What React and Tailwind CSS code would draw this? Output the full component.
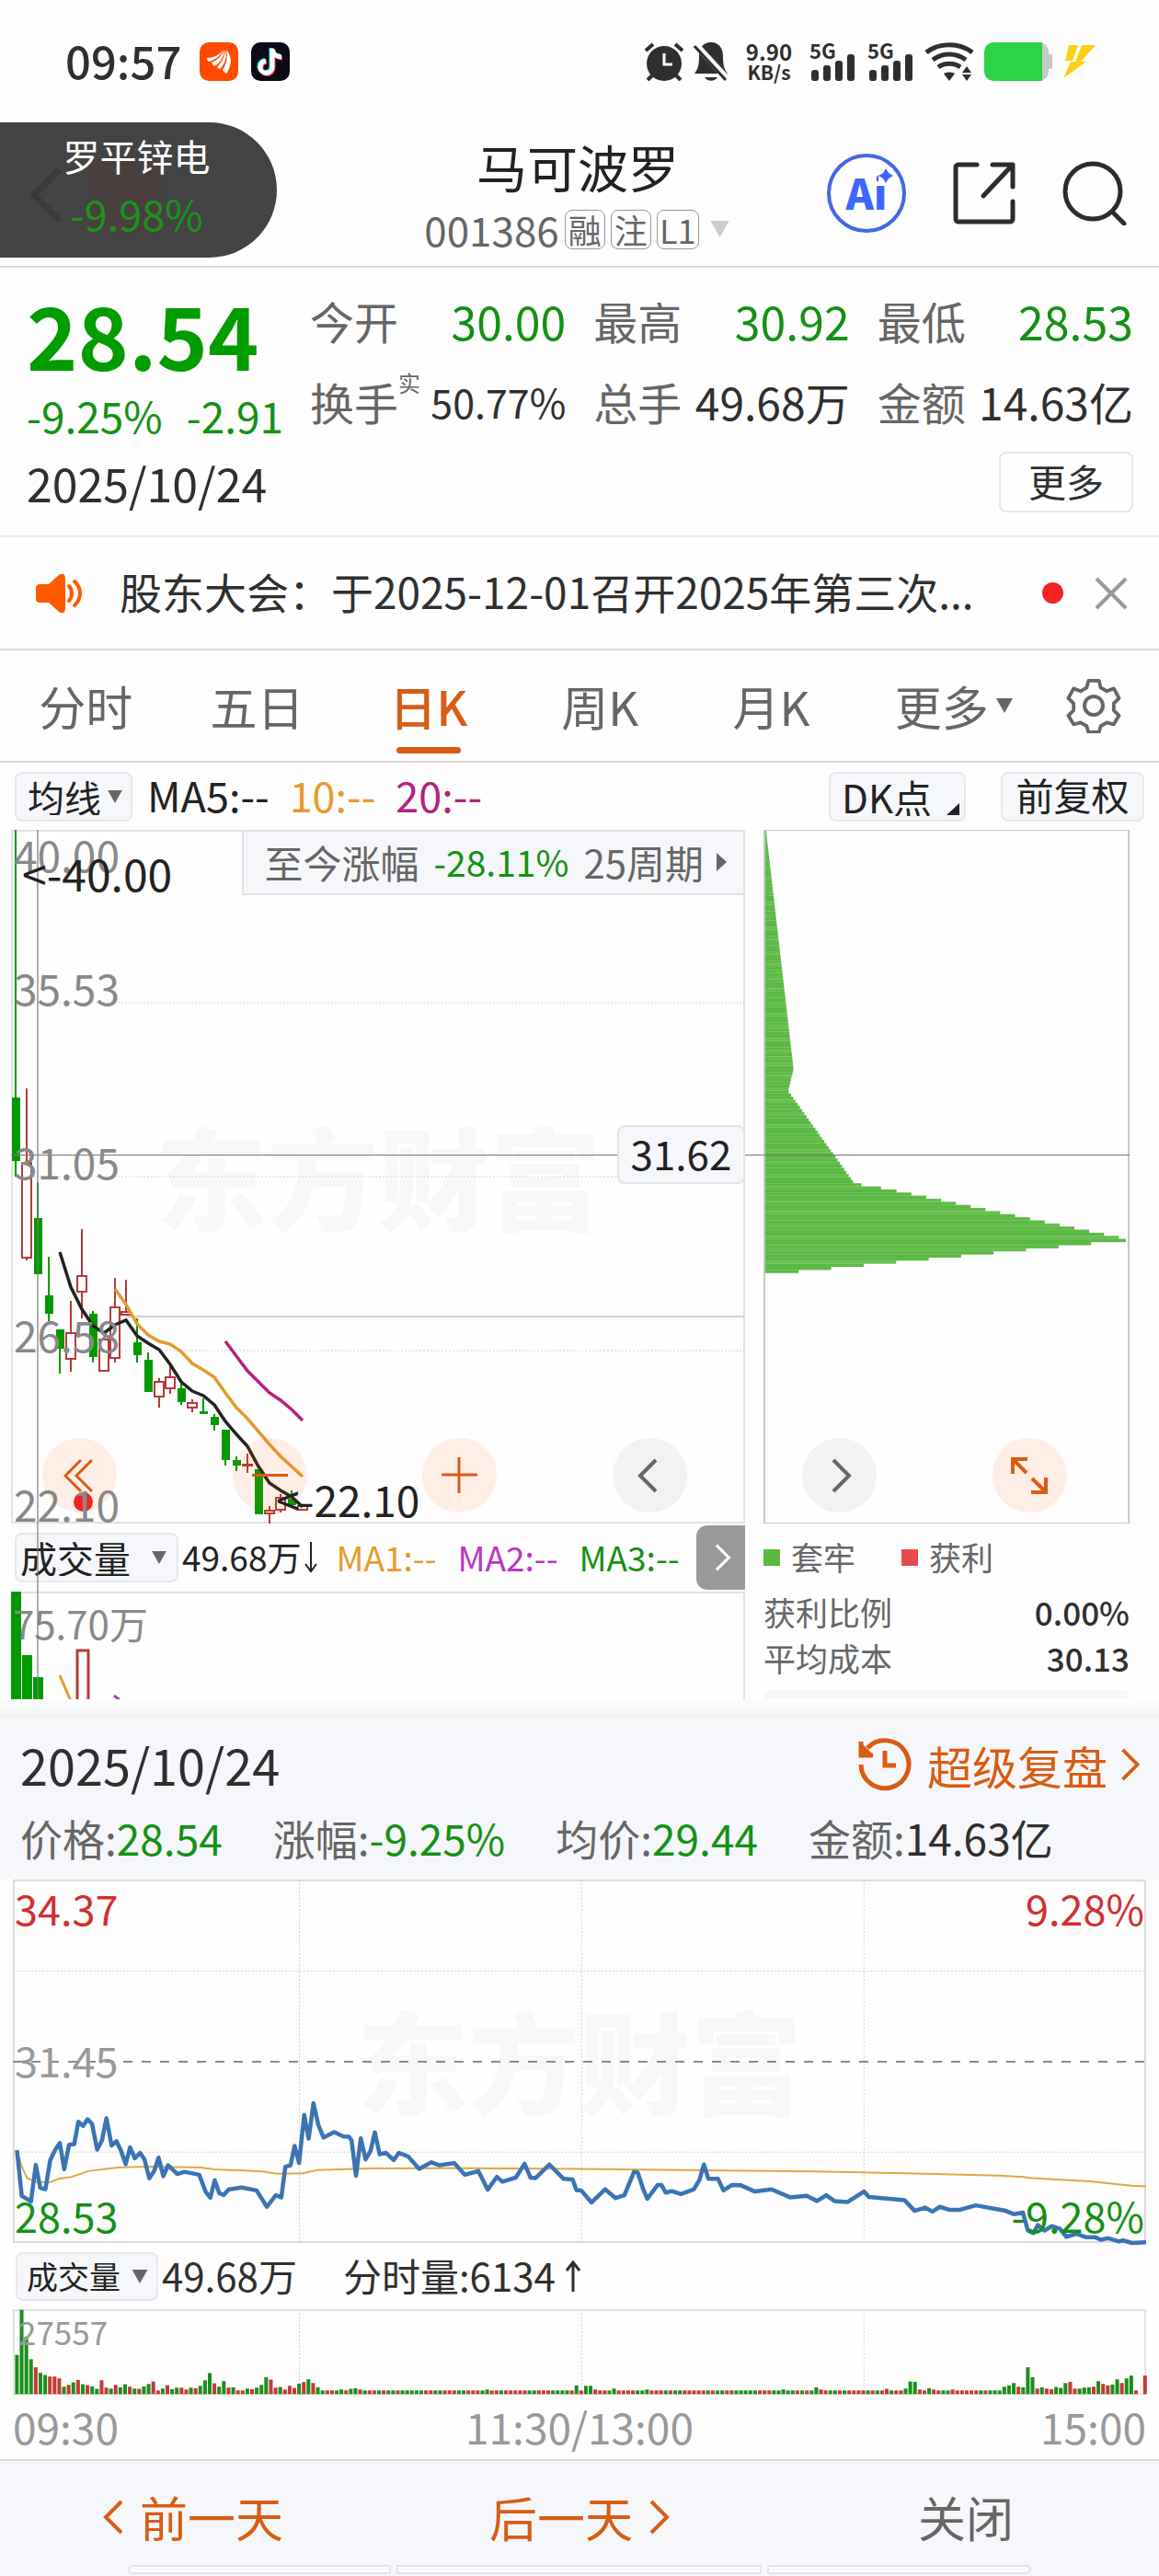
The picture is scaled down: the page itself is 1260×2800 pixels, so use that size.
import React from "react";

// [x, open/close top, open/close bottom, high, low, up]
const candles = [
  [17, 1193, 1262, 902, 1279, 0],
  [29, 1264, 1367, 1183, 1370, 1],
  [41, 1324, 1385, 1285, 1385, 0],
  [53, 1408, 1428, 1366, 1436, 0],
  [65, 1445, 1466, 1445, 1493, 0],
  [77, 1449, 1477, 1414, 1491, 1],
  [89, 1387, 1404, 1336, 1433, 1],
  [101, 1428, 1475, 1425, 1481, 0],
  [113, 1456, 1490, 1456, 1490, 1],
  [125, 1421, 1476, 1389, 1481, 1],
  [137, 1426, 1429, 1391, 1429, 1],
  [149, 1459, 1473, 1433, 1481, 0],
  [161, 1478, 1513, 1470, 1513, 0],
  [173, 1502, 1518, 1498, 1530, 1],
  [185, 1497, 1509, 1485, 1515, 1],
  [197, 1509, 1524, 1504, 1527, 0],
  [209, 1525, 1530, 1521, 1535, 1],
  [221, 1534, 1537, 1520, 1537, 0],
  [233, 1540, 1549, 1537, 1555, 0],
  [245, 1554, 1587, 1554, 1593, 0],
  [257, 1587, 1593, 1583, 1599, 0],
  [269, 1592, 1593, 1580, 1601, 1],
  [281, 1597, 1646, 1597, 1646, 0],
  [293, 1642, 1645, 1637, 1656, 1],
  [305, 1628, 1641, 1624, 1644, 1],
  [317, 1629, 1636, 1620, 1636, 0],
  [329, 1637, 1641, 1637, 1641, 1],
];

const ma5 =
  "65,1361 77,1399 89,1423 101,1441 113,1449 125,1440 137,1435 149,1452 161,1460 173,1467 185,1483 197,1502 209,1512 221,1517 233,1527 245,1545 257,1559 269,1572 281,1594 293,1612 305,1620 317,1627 329,1638";
const ma10 =
  "125,1401 137,1418 149,1439 161,1451 173,1458 185,1461 197,1469 209,1482 221,1489 233,1497 245,1514 257,1530 269,1542 281,1556 293,1570 305,1583 317,1594 329,1605";
const ma20 =
  "245,1458 257,1474 269,1490 281,1502 293,1514 305,1522 317,1532 329,1544";

// outline of the cost distribution: [y, width]
const chipShape = [
  [0, 1],
  [258, 31],
  [282, 25],
  [383, 98],
  [388, 130],
  [441, 386],
  [443, 396],
  [446, 396],
  [448, 360],
  [482, 0],
];

const priceLine =
  "47,1205 60,1330 85,1345 98,1245 110,1308 124,1312 137,1232 150,1205 163,1185 175,1257 188,1190 202,1188 213,1127 226,1138 238,1120 250,1132 264,1203 277,1178 289,1117 303,1192 316,1180 328,1205 341,1243 353,1197 366,1227 380,1212 392,1230 405,1282 418,1262 430,1225 443,1276 456,1246 481,1270 500,1264 540,1272 557,1318 570,1335 582,1287 594,1322 606,1328 620,1312 655,1307 695,1315 723,1360 747,1328 762,1334 773,1250 787,1246 798,1193 810,1240 824,1108 836,1173 849,1076 862,1135 876,1170 905,1155 930,1167 945,1168 952,1178 964,1275 977,1172 990,1230 1003,1208 1015,1156 1028,1216 1045,1212 1066,1232 1080,1212 1105,1222 1135,1256 1168,1238 1190,1246 1230,1240 1258,1272 1295,1262 1320,1313 1345,1278 1360,1291 1396,1280 1420,1242 1436,1280 1450,1281 1487,1244 1525,1283 1550,1285 1560,1314 1573,1315 1601,1348 1638,1312 1666,1336 1690,1328 1716,1264 1726,1266 1741,1312 1752,1338 1780,1300 1790,1300 1802,1321 1818,1317 1843,1325 1878,1312 1893,1286 1905,1244 1917,1283 1943,1283 1958,1315 1981,1300 2005,1301 2043,1318 2088,1312 2138,1334 2183,1330 2211,1344 2236,1328 2258,1344 2293,1347 2338,1318 2351,1333 2448,1342 2475,1371 2503,1362 2523,1373 2543,1360 2568,1368 2598,1368 2640,1356 2718,1370 2743,1380 2768,1376 2781,1425 2796,1432 2808,1410 2826,1425 2846,1413 2868,1420 2885,1442 2913,1434 2938,1443 2963,1443 2978,1450 2998,1446 3028,1455 3038,1452 3063,1459 3101,1457";
const avgLine =
  "47,1205 60,1250 75,1282 100,1292 135,1293 160,1283 195,1278 240,1262 320,1252 400,1250 545,1252 580,1257 710,1263 750,1269 820,1268 860,1259 1000,1255 1200,1254 1568,1256 2200,1263 2450,1268 2700,1274 2770,1278 2790,1281 2950,1290 3060,1302 3101,1304";

// one entry per minute: r = up, g = down, number = height (12 when left out)
const minuteVolume =
  "g127 g273 g186 g113 r87 g69 g62 r57 r57 r51 g24 r30 g38 r46 g32 r29 g25 g17 r45 r21 g18 r30 g22 g32 r24 g18 r17 g25 g33 r41 r12 g18 r29 g16 g21 r21 r15 g21 r19 g27 g45 g68 r35 g24 g42 r21 g22 r r g18 r16 g21 g30 g55 r47 r21 g23 r15 r27 r20 g34 r39 g48 r36 g22 g " +
  "r r g g15 r g17 g19 r15 g r r g r g g r g g g g g r r g g r r r g g r r r g g15 r r g r r r r r g g r r r g g g g r g28 " +
  "r g27 g27 r15 r r g g18 r r r r g g g15 r r r g r g g r r r r r g r g g r r g g g g g r r r g g g15 g g r g r g g22 r15 r g g r g r r r r g r g r r17 g r r g18 g41 g40 r15 r g19 r15 r g g r15 r r r r r g r g g g " +
  "g24 g28 g36 r24 g22 g87 g55 r18 g22 r18 r16 g23 g20 g36 r40 r18 g18 g21 g22 r24 g42 r33 r28 g31 g48 r36 g51 g60 r12";

const chipWidth = (y) => {
  for (let i = 1; i < chipShape.length; i++) {
    const [y0, w0] = chipShape[i - 1];
    const [y1, w1] = chipShape[i];
    if (y <= y1) return w0 + ((w1 - w0) * (y - y0)) / (y1 - y0);
  }
  return 0;
};

const Triangle = ({ className }) => (
  <svg viewBox="0 0 18 16" className={className} fill="currentColor" aria-hidden="true">
    <path d="M0 0h18L9 16z" />
  </svg>
);

const Chevron = ({ className, left }) => (
  <svg viewBox="0 0 22 38" className={className} fill="none" stroke="currentColor" strokeWidth="4" aria-hidden="true">
    <path d={left ? "M20 2L3 19l17 17" : "M2 2l17 17L2 36"} />
  </svg>
);

const Picker = ({ id, label, value, className, pad = "pl-3", arrow }) => (
  <div className={`relative shrink-0 rounded-lg border-2 border-[#e6e8eb] bg-[#f6f7fa] ${className}`}>
    <label htmlFor={id} className="sr-only">{label}</label>
    <select id={id} className={`h-full w-full appearance-none bg-transparent leading-none text-[#222] ${pad}`}>
      <option>{value}</option>
    </select>
    {arrow}
  </div>
);

const Signal = () => (
  <div className="flex flex-col">
    <span className="h-4 text-[22px] font-bold leading-4">5G</span>
    <svg viewBox="0 0 50 30" className="-mt-1 h-[30px] w-[50px]" fill="currentColor">
      <rect x="2" y="18" width="8" height="12" rx="3" />
      <rect x="15" y="13" width="8" height="17" rx="3" />
      <rect x="28" y="8" width="8" height="22" rx="3" />
      <rect x="41" y="1" width="8" height="29" rx="3" />
    </svg>
  </div>
);

const StatusBar = () => (
  <div className="flex h-[133px] items-center pl-[71px] pr-[68px] text-[#2f2f2f]">
    <span className="pb-1 text-[49px] font-medium leading-none">09:57</span>
    <svg viewBox="0 0 42 42" className="ml-5 h-[42px] w-[42px]">
      <rect width="42" height="42" rx="10" fill="#ff4a00" />
      <g fill="#fff">
        <path d="M8 17c7 0 13-3 18-9-4 7-9 11-16 13-1-1-2-2-2-4z" />
        <path d="M13 22c7-3 11-8 14-14-1 8-4 14-11 18-1-1-2-2-3-4z" />
        <path d="M19 27c5-5 8-11 9-19 2 8 0 15-6 21-1 0-2-1-3-2z" />
        <path d="M25 30c4-6 6-13 4-22 6 7 7 16 0 26-1-1-3-2-4-4z" />
      </g>
    </svg>
    <svg viewBox="0 0 42 42" className="ml-[14px] h-[42px] w-[42px]">
      <rect width="42" height="42" rx="10" fill="#0b0b16" />
      <g fill="none" strokeWidth="5">
        <path d="M22 6v20a6.500 6.500 0 1 1-7-6.500M22 7c1 5 5 8 10 8" stroke="#25f4ee" />
        <path d="M24 8v20a6.500 6.500 0 1 1-7-6.500M24 9c1 5 5 8 10 8" stroke="#fe2c55" />
        <path d="M23 7v20a6.500 6.500 0 1 1-7-6.500M23 8c1 5 5 8 10 8" stroke="#fff" />
      </g>
    </svg>
    <svg viewBox="0 0 44 42" className="ml-auto h-[42px] w-[44px]" fill="currentColor">
      <circle cx="22" cy="23" r="19" />
      <path d="M22 12v12h9" stroke="#fff" strokeWidth="3" fill="none" />
      <path d="M2 9l8-7M42 9l-8-7M9 36l-5 5M35 36l5 5" stroke="currentColor" strokeWidth="4" />
    </svg>
    <svg viewBox="0 0 38 42" className="ml-[10px] h-[42px] w-[38px]" fill="currentColor">
      <path d="M19 0c9 0 13 7 13 15 0 9 1 14 5 19H1c4-5 5-10 5-19C6 7 10 0 19 0zM12 38h14c-3 5-11 5-14 0z" />
      <path d="M1 1l36 39" stroke="#fff" strokeWidth="7" />
      <path d="M1 4l34 37" stroke="currentColor" strokeWidth="3" />
    </svg>
    <div className="ml-[17px] flex w-[54px] flex-col items-center font-bold">
      <span className="text-[24px] leading-[23px]">9.90</span>
      <span className="text-[21px] leading-[23px]">KB/s</span>
    </div>
    <div className="ml-[17px] flex gap-[13px]">
      <Signal />
      <Signal />
    </div>
    <svg viewBox="0 0 52 42" className="ml-[13px] h-[42px] w-[52px]">
      <g fill="none" stroke="#2f2f2f" strokeWidth="5">
        <path d="M1 11c14-11 36-11 50 0M8 19c11-8 25-8 36 0M14 27c7-5 17-5 24 0" />
      </g>
      <path d="M20 34c3-2 9-2 12 0l-6 8zM40 33l5-7 5 7zM40 35l5 7 5-7z" fill="#2f2f2f" />
    </svg>
    <svg viewBox="0 0 74 42" className="ml-3 h-[42px] w-[74px]">
      <rect x="10" width="60" height="42" rx="10" fill="#c9c9c9" />
      <rect x="66" y="13" width="8" height="16" rx="3" fill="#c9c9c9" />
      <path d="M10 0h53v42H10A10 10 0 0 1 0 32V10A10 10 0 0 1 10 0z" fill="#2bd546" />
    </svg>
    <svg viewBox="0 0 36 36" className="ml-3 h-[36px] w-[36px]" fill="#fdd017">
      <path d="M6 0h10l-6 17H2zM20 0h15L19 18h6L0 36l8-18h5z" />
    </svg>
  </div>
);

const Header = () => (
  <header className="grid h-[158px] grid-cols-[357px_1fr_361px] border-b-2 border-[#d9d9d9]">
    <a
      href="#back"
      className="relative flex h-[147px] w-[301px] flex-col items-center rounded-r-full bg-[#434343] pr-1 pt-3 leading-none"
    >
      <Chevron left className="absolute left-8 top-12 h-[62px] w-[36px] text-[#393939]" />
      <span className="absolute left-[97px] top-[40px] h-[80px] w-[80px] rounded-lg bg-[#483f3e]" />
      <span className="relative mt-1 text-[40px] text-white">罗平锌电</span>
      <span className="relative mt-[20px] text-[45px] text-[#1c921c]">-9.98%</span>
    </a>
    <div className="flex flex-col items-center">
      <h1 className="mt-[20px] text-[55px] leading-none text-[#222]">马可波罗</h1>
      <div className="mt-[16px] flex items-center gap-[6px] text-[#666]">
        <span className="text-[44px] leading-[50px]">001386</span>
        <span className="flex h-[43px] w-[44px] items-center justify-center rounded-lg border border-[#999] text-[36px] leading-none">融</span>
        <span className="flex h-[43px] w-[44px] items-center justify-center rounded-lg border border-[#999] text-[36px] leading-none">注</span>
        <span className="flex h-[43px] w-[46px] items-center justify-center rounded-lg border border-[#999] text-[36px] leading-none">L1</span>
        <Triangle className="ml-1 h-[18px] w-[25px] text-[#ccc]" />
      </div>
    </div>
    <div className="flex items-center justify-between pb-[2px] pr-[35px] text-[#2c2c2c]">
      <button className="relative flex h-[86px] w-[86px] items-center justify-center rounded-full border-4 border-[#4468e4]">
        <span className="pb-1 text-[46px] font-black leading-none text-[#3d67ff]">Ai</span>
        <svg viewBox="0 0 16 16" className="absolute right-[10px] top-[12px] h-4 w-4">
          <rect width="16" height="16" fill="#fefefe" />
          <path d="M8 0l3 5 5 3-5 3-3 5-3-5-5-3 5-3z" fill="#3d67ff" />
        </svg>
      </button>
      <button aria-label="分享">
        <svg viewBox="0 0 70 70" className="h-[70px] w-[70px]" fill="none" stroke="currentColor" strokeWidth="5" strokeLinecap="round" strokeLinejoin="round">
          <path d="M27 4H7a3 3 0 0 0-3 3v56a3 3 0 0 0 3 3h56a3 3 0 0 0 3-3V44M44 4h22v24M65 5L34 38" />
        </svg>
      </button>
      <button aria-label="搜索">
        <svg viewBox="0 0 70 70" className="h-[70px] w-[70px]" fill="none" stroke="currentColor" strokeWidth="5" strokeLinecap="round">
          <circle cx="33" cy="33" r="30" />
          <path d="M55 56l12 12" />
        </svg>
      </button>
    </div>
  </header>
);

const Stat = ({ label, sup, value, valueClass }) => (
  <div className="flex h-[88px] items-center justify-between leading-none">
    <dt className="relative text-[48px] text-[#666]">
      {label}
      {sup && <sup className="absolute -top-2 left-full text-[24px] leading-none">{sup}</sup>}
    </dt>
    <dd className={valueClass}>{value}</dd>
  </div>
);

const Quote = () => (
  <section className="flex h-[293px] border-b-2 border-[#ebebeb] pl-[29px] pr-[28px]">
    <div className="w-[308px] shrink-0">
      <div className="mt-[23px] text-[94px] font-bold leading-[96px] text-[#009c00]">28.54</div>
      <div className="mt-[18px] flex gap-[26px] text-[46px] leading-none text-[#149114]">
        <span>-9.25%</span>
        <span>-2.91</span>
      </div>
      <div className="mt-[25px] text-[50px] leading-none text-[#2f2f2f]">2025/10/24</div>
    </div>
    <div className="flex flex-1 flex-col items-end pt-[13px]">
      <dl className="grid w-full grid-cols-3 gap-x-[30px]">
        <Stat label="今开" value="30.00" valueClass="text-[50px] text-[#149114]" />
        <Stat label="最高" value="30.92" valueClass="text-[50px] text-[#149114]" />
        <Stat label="最低" value="28.53" valueClass="text-[50px] text-[#149114]" />
        <Stat label="换手" sup="实" value="50.77%" valueClass="text-[43px] text-[#2f2f2f]" />
        <Stat label="总手" value="49.68万" valueClass="text-[48px] text-[#2f2f2f]" />
        <Stat label="金额" value="14.63亿" valueClass="text-[48px] text-[#2f2f2f]" />
      </dl>
      <button className="mt-[11px] h-[66px] w-[146px] rounded-lg border-2 border-[#e8e8e8] pb-1 text-[41px] leading-none text-[#2f2f2f]">
        更多
      </button>
    </div>
  </section>
);

const Notice = () => (
  <section className="flex h-[123px] items-center border-b-2 border-[#d9d9d9] pl-[38px] pr-[34px]">
    <svg viewBox="0 0 54 42" className="h-[42px] w-[54px] shrink-0" fill="#ff5a00">
      <path d="M6 11h9L26 1c4-3 7-1 7 4v32c0 5-3 7-7 4L15 31H6c-4 0-5-2-5-5V16c0-3 1-5 5-5z" />
      <path d="M37 13c4 4 4 12 0 16M43 8c8 7 8 19 0 26" fill="none" stroke="#ff5a00" strokeWidth="4" strokeLinecap="round" />
    </svg>
    <a href="#notice" className="ml-[38px] min-w-0 flex-1 truncate pb-[6px] text-[46px] leading-[70px] text-[#2f2f2f]">
      股东大会：于2025-12-01召开2025年第三次...
    </a>
    <span className="h-[23px] w-[23px] rounded-full bg-[#f32424]" />
    <button aria-label="关闭公告" className="ml-[34px]">
      <svg viewBox="0 0 36 36" className="h-[36px] w-[36px]" stroke="#999" strokeWidth="4">
        <path d="M2 2l32 32M34 2L2 34" />
      </svg>
    </button>
  </section>
);

const tabs = ["分时", "五日", "日K", "周K", "月K"];

const Tabs = () => (
  <nav className="grid h-[122px] grid-cols-[repeat(6,1fr)_142px] border-b-2 border-[#d9d9d9] text-[51px] leading-none text-[#666]">
    {tabs.map((t) => (
      <button key={t} className={`relative ${t === "日K" ? "font-medium text-[#d95c14]" : ""}`}>
        {t}
        {t === "日K" && (
          <span className="absolute bottom-[8px] left-1/2 h-[7px] w-[70px] -translate-x-1/2 rounded-full bg-[#d95c14]" />
        )}
      </button>
    ))}
    <button className="flex items-center justify-center gap-2 pl-6">
      更多
      <Triangle className="h-4 w-[18px]" />
    </button>
    <button aria-label="设置" className="flex items-center justify-center">
      <svg viewBox="0 0 60 60" className="h-[60px] w-[60px]" fill="none" stroke="currentColor" strokeWidth="4" strokeLinejoin="round">
        <path d="M24 3h12l2 8 7 4 8-3 6 11-6 6v8l6 6-6 10-8-2-7 4-2 7H24l-2-7-7-4-8 2-6-10 6-6v-8l-6-6 6-11 8 3 7-4z" transform="translate(1.500 0) scale(.95)" />
        <circle cx="30" cy="30" r="10" />
      </svg>
    </button>
  </nav>
);

const MaRow = () => (
  <div className="flex h-[73px] items-center pl-4 pr-4 text-[45px] leading-none">
    <Picker
      id="ma"
      label="主图指标"
      value="均线"
      className="h-[54px] w-[128px] text-[40px]"
      arrow={<Triangle className="pointer-events-none absolute right-2 top-[18px] h-[14px] w-[18px] text-[#666]" />}
    />
    <span className="ml-4 pb-1 text-[#222]">MA5:--</span>
    <span className="ml-[22px] pb-1 text-[#e89a2e]">10:--</span>
    <span className="ml-[22px] pb-1 text-[#b5217c]">20:--</span>
    <Picker
      id="dk"
      label="DK点"
      value="DK点"
      className="ml-auto h-[54px] w-[149px] text-[42px]"
      arrow={
        <svg viewBox="0 0 14 13" className="pointer-events-none absolute bottom-[5px] right-[5px] h-[13px] w-[14px]" fill="#222">
          <path d="M14 0v13H0z" />
        </svg>
      }
    />
    <button className="ml-[38px] h-[54px] w-[156px] rounded-lg border-2 border-[#e6e8eb] bg-[#f6f7fa] pb-1 text-[41px] leading-none text-[#222]">
      前复权
    </button>
  </div>
);

const DailyChart = () => (
  <div className="relative h-[754px] border-x-2 border-y-2 border-[#e2e2e2]">
    <div className="absolute inset-0 flex items-center justify-center pb-2 text-[121px] font-black leading-none text-[#f7f7f7]">
      东方财富
    </div>
    <svg viewBox="12 902 798 754" preserveAspectRatio="none" className="absolute -left-[2px] -top-[2px] h-[754px] w-[calc(100%+4px)]">
      <g stroke="#d4d4d4" strokeWidth="1" strokeDasharray="2 2">
        <path d="M12 1090h798M12 1279h798M12 1468h798" />
      </g>
      <path d="M138 1431h672" stroke="#d2d2d2" strokeWidth="2" />
      {candles.map(([x, top, bottom, high, low, up]) =>
        up ? (
          <g key={x} fill="none" stroke="#b43c3a" strokeWidth="2">
            <path d={`M${x} ${high}V${top}M${x} ${bottom}V${low}`} />
            <rect x={x - 5} y={top} width="10" height={bottom - top} />
          </g>
        ) : (
          <g key={x} fill="#009a00">
            <rect x={x - 1} y={high} width="2" height={low - high} />
            <rect x={x - 4} y={top} width="9" height={bottom - top} />
          </g>
        )
      )}
      <g fill="none" strokeWidth="3.500">
        <polyline points={ma5} stroke="#222" />
        <polyline points={ma10} stroke="#e39a30" />
        <polyline points={ma20} stroke="#b5217c" />
      </g>
    </svg>
    <button className="absolute right-0 top-0 flex h-[69px] items-center whitespace-nowrap border-b-2 border-l-2 border-[#e2e2e2] bg-[#f6f7fa] pb-[2px] pl-[22px] pr-[18px] text-[42px] leading-none text-[#666]">
      至今涨幅
      <span className="ml-4 text-[39px] text-[#149114]">-28.11%</span>
      <span className="ml-4">25周期</span>
      <svg viewBox="0 0 11 20" className="ml-[14px] h-5 w-[11px]" fill="#666">
        <path d="M0 0l11 10L0 20z" />
      </svg>
    </button>
  </div>
);

const priceTicks = [
  ["40.00", "top-[3px]"],
  ["35.53", "top-[148px]"],
  ["31.05", "top-[337px]"],
  ["26.58", "top-[525px]"],
  ["22.10", "top-[709px]"],
];

const round = "flex h-[81px] w-[81px] items-center justify-center rounded-full";

const ChartTools = () => (
  <div className="absolute left-[46px] right-[100px] top-[661px] flex justify-between">
    <button aria-label="最早" className={`${round} bg-[#fd6414]/10`}>
      <svg viewBox="0 0 32 36" className="mr-1 h-[36px] w-[32px]" fill="none" stroke="#d95c14" strokeWidth="3">
        <path d="M19 1L2 18l17 17M31 1L14 18l17 17" />
      </svg>
    </button>
    <button aria-label="缩小" className={`${round} bg-[#fd6414]/10`}>
      <span className="h-[3px] w-[39px] bg-[#d95c14]" />
    </button>
    <button aria-label="放大" className={`${round} bg-[#fd6414]/10`}>
      <svg viewBox="0 0 39 39" className="h-[39px] w-[39px]" stroke="#d95c14" strokeWidth="3">
        <path d="M0 19h39M19 0v39" />
      </svg>
    </button>
    <button aria-label="左移" className={`${round} bg-[#f2f2f2]`}>
      <Chevron left className="mr-1 h-[38px] w-[22px] text-[#666]" />
    </button>
    <button aria-label="右移" className={`${round} bg-[#f2f2f2]`}>
      <Chevron className="ml-1 h-[38px] w-[22px] text-[#666]" />
    </button>
    <button aria-label="全屏" className={`${round} bg-[#fd6414]/10`}>
      <svg viewBox="0 0 40 40" className="h-10 w-10" fill="none" stroke="#d95c14" strokeWidth="4">
        <path d="M2 18V2h16M2 2l15 15M38 22v16H22M38 38L23 23" />
      </svg>
    </button>
  </div>
);

const VolumeRow = () => (
  <div className="relative flex h-[74px] items-center pl-1 pr-[70px] text-[37px] leading-none">
    <Picker
      id="vol-day"
      label="副图指标"
      value="成交量"
      pad="pl-1"
      className="h-[54px] w-[178px] text-[40px]"
      arrow={<Triangle className="pointer-events-none absolute right-[10px] top-[18px] h-[14px] w-[18px] text-[#666]" />}
    />
    <span className="ml-1 whitespace-nowrap pb-[2px] text-[#222]">49.68万</span>
    <svg viewBox="0 0 14 34" className="ml-1 h-[34px] w-[14px] shrink-0" fill="none" stroke="#222" strokeWidth="2">
      <path d="M7 0v32M1 24l6 8 6-8" />
    </svg>
    <div className="ml-[20px] flex gap-[23px] whitespace-nowrap pb-[2px]">
      <span className="text-[#e89a2e]">MA1:--</span>
      <span className="text-[#b936c4]">MA2:--</span>
      <span className="text-[#149114]">MA3:--</span>
    </div>
    <button aria-label="更多指标" className="absolute right-0 top-[2px] flex h-[70px] w-[53px] items-center justify-center rounded-l-xl bg-[#999] pl-1">
      <Chevron className="h-[30px] w-[18px] text-white" />
    </button>
  </div>
);

const DailyVolume = () => (
  <div className="relative h-[117px] border-l-2 border-r-2 border-t-2 border-[#e2e2e2]">
    <svg viewBox="12 1730 798 117" preserveAspectRatio="none" className="absolute -left-[2px] -top-[2px] h-[117px] w-[calc(100%+4px)]">
      <g fill="#009a00">
        <rect x="12" y="1730" width="11" height="117" />
        <rect x="24" y="1799" width="11" height="48" />
        <rect x="36" y="1823" width="11" height="24" />
      </g>
      <path d="M84 1850v-56h12v56" fill="none" stroke="#b43c3a" strokeWidth="3" />
      <path d="M65 1821l12 28" stroke="#e39a30" strokeWidth="3" />
      <path d="M124 1843l6 5" stroke="#b936c4" strokeWidth="3" />
    </svg>
    <span className="absolute left-0 top-[11px] text-[42px] leading-none text-[#888]">75.70万</span>
  </div>
);

const ChipPanel = () => {
  const rows = Array.from({ length: 143 }, (_, i) => i);
  return (
    <div className="w-[398px] shrink-0">
      <svg viewBox="0 0 398 754" preserveAspectRatio="none" className="block h-[754px] w-full border-x-2 border-y border-[#c9c9c9]">
        {rows.map((i) => (
          <rect
            key={i}
            x="0"
            y={i * 3.37}
            width={chipWidth(i * 3.37)}
            height="3.5"
            fill={i % 4 === 3 ? "#66be4f" : "#5cb944"}
          />
        ))}
      </svg>
      <div className="flex h-[70px] items-center text-[35px] leading-none text-[#666]">
        <span className="mr-3 mt-1 h-[18px] w-[18px] bg-[#5cb944]" />
        套牢
        <span className="ml-[50px] mr-3 mt-1 h-[18px] w-[18px] bg-[#e84a4a]" />
        获利
      </div>
      <dl className="text-[35px] leading-none text-[#666]">
        <div className="flex h-[50px] items-center justify-between">
          <dt>获利比例</dt>
          <dd className="font-medium text-[#2f2f2f]">0.00%</dd>
        </div>
        <div className="flex h-[51px] items-center justify-between">
          <dt>平均成本</dt>
          <dd className="font-medium text-[#2f2f2f]">30.13</dd>
        </div>
      </dl>
      <div className="mt-[10px] h-[10px] rounded-t-lg bg-[#f6f7fa]" />
    </div>
  );
};

const DailyPanel = () => (
  <section className="relative flex gap-5 overflow-hidden pl-3 pr-8">
    <div className="min-w-0 flex-1">
      <DailyChart />
      <VolumeRow />
      <DailyVolume />
    </div>
    <ChipPanel />
    <span className="absolute bottom-0 left-10 top-0 w-[2px] bg-[#777]/60" />
    <span className="absolute left-3 right-8 top-[353px] h-px bg-[#777]" />
    <ChartTools />
    <span className="absolute left-20 top-[720px] h-[21px] w-[21px] rounded-full bg-[#f32424]" />
    {priceTicks.map(([price, top]) => (
      <span key={price} className={`absolute left-[15px] ${top} text-[46px] leading-none text-[#888]`}>
        {price}
      </span>
    ))}
    <span className="absolute left-6 top-[22px] text-[48px] leading-none text-[#222]">&lt;-40.00</span>
    <span className="absolute left-[300px] top-[704px] text-[46px] leading-none text-[#222]">&lt;-22.10</span>
    <span className="absolute right-[450px] top-[321px] flex h-[64px] w-[139px] items-center justify-center rounded-lg border-2 border-[#e2e4e7] bg-[#f6f7fa] pb-1 text-[44px] leading-none text-[#222]">
      31.62
    </span>
  </section>
);

const Metric = ({ label, value, green }) => (
  <div className="flex whitespace-nowrap">
    <dt className="text-[#666]">{label}:</dt>
    <dd className={green ? "text-[#149114]" : "text-[#2f2f2f]"}>{value}</dd>
  </div>
);

const ReviewHeader = () => (
  <div className="h-[175px] bg-[#f6f7fa] pl-[22px] pr-5">
    <div className="flex h-[102px] items-center pb-[2px]">
      <h2 className="text-[54px] leading-none text-[#2f2f2f]">2025/10/24</h2>
      <a href="#review" className="ml-auto flex items-center text-[49px] leading-none text-[#d95c14]">
        <svg viewBox="0 0 58 58" className="mr-[17px] h-[58px] w-[58px]" fill="none" stroke="currentColor" strokeWidth="5">
          <path d="M3 29a26 26 0 1 0 7-18" />
          <path d="M2 4v15h15z" fill="currentColor" stroke="none" />
          <path d="M3 4v15h13" />
          <path d="M29 14v16h12" />
        </svg>
        超级复盘
        <Chevron className="ml-[14px] h-[36px] w-[22px]" />
      </a>
    </div>
    <dl className="flex gap-[55px] text-[46px] leading-[54px]">
      <Metric label="价格" value="28.54" green />
      <Metric label="涨幅" value="-9.25%" green />
      <Metric label="均价" value="29.44" green />
      <Metric label="金额" value="14.63亿" />
    </dl>
  </div>
);

const MinuteChart = () => (
  <div className="relative h-[395px] border-x-2 border-b-2 border-t-2 border-[#dcdcdc]">
    <div className="absolute inset-0 flex items-center justify-center pb-2 text-[121px] font-black leading-none text-[#f7f7f7]">
      东方财富
    </div>
    <svg viewBox="36 463 3065 996" preserveAspectRatio="none" className="absolute -left-[2px] -top-[2px] h-[395px] w-[calc(100%+4px)] overflow-visible" fill="none">
      <path
        d="M36 714h3065M36 1210h3065M811 463v996M1574 463v996M2338 463v996"
        stroke="#d0d0d0"
        strokeDasharray="2 2"
        vectorEffect="non-scaling-stroke"
      />
      <path d="M36 962h3065" stroke="#8a8a8a" strokeWidth="2" strokeDasharray="10 10" vectorEffect="non-scaling-stroke" />
      <polyline points={avgLine} stroke="#e0a848" strokeWidth="2" vectorEffect="non-scaling-stroke" />
    </svg>
    <span className="absolute left-0 top-[6px] text-[45px] leading-none text-[#d03030]">34.37</span>
    <span className="absolute left-0 top-[171px] text-[45px] leading-none text-[#999]">31.45</span>
    <span className="absolute bottom-[6px] left-0 text-[45px] leading-none text-[#149114]">28.53</span>
    <span className="absolute right-0 top-[6px] text-[45px] leading-none text-[#d03030]">9.28%</span>
    <svg viewBox="36 463 3065 996" preserveAspectRatio="none" className="absolute -left-[2px] -top-[2px] h-[395px] w-[calc(100%+4px)] overflow-visible" fill="none">
      <polyline points={priceLine} stroke="#3a74b4" strokeWidth="4.500" strokeLinejoin="round" vectorEffect="non-scaling-stroke" />
    </svg>
    <span className="absolute bottom-[6px] right-0 text-[45px] leading-none text-[#149114]">-9.28%</span>
  </div>
);

const MinuteVolume = () => {
  const bars = minuteVolume.split(" ").map((t) => ({ up: t[0] === "r", h: Number(t.slice(1)) || 12 }));
  const step = 3052 / 240;
  return (
    <div className="relative h-[93px] border-x-2 border-y-2 border-[#e2e2e2]">
      <svg viewBox="36 271 3065 277" preserveAspectRatio="none" className="absolute -left-[2px] -top-[2px] h-[93px] w-[calc(100%+4px)] overflow-visible">
        <path d="M811 271v275M1574 271v275M2338 271v275" stroke="#d0d0d0" strokeDasharray="2 2" vectorEffect="non-scaling-stroke" />
        {bars.map((b, i) => (
          <rect key={i} x={42 + i * step} y={546 - b.h} width="10" height={b.h} fill={b.up ? "#c43a38" : "#1b8f1b"} />
        ))}
        <rect x="3093" y="486" width="10" height="60" fill="#c43a38" />
      </svg>
      <span className="absolute left-1 top-1 text-[35px] leading-none text-[#999]">27557</span>
    </div>
  );
};

const MinutePanel = () => (
  <section className="pl-[14px] pr-[14px]">
    <MinuteChart />
    <div className="flex h-[72px] items-center pl-[3px] text-[42px] leading-none text-[#2f2f2f]">
      <Picker
        id="vol-minute"
        label="分时副图指标"
        value="成交量"
        className="h-[53px] w-[155px] text-[34px]"
        pad="pl-[10px]"
        arrow={<Triangle className="pointer-events-none absolute right-[9px] top-[17px] h-[15px] w-[18px] text-[#666]" />}
      />
      <span className="ml-1 pb-[2px]">49.68万</span>
      <span className="ml-[50px] pb-[2px]">分时量:6134</span>
      <svg viewBox="0 0 18 34" className="ml-[10px] h-[34px] w-[18px]" fill="none" stroke="#2f2f2f" strokeWidth="3">
        <path d="M9 34V2M2 11l7-9 7 9" />
      </svg>
    </div>
    <MinuteVolume />
    <div className="flex h-[70px] items-center justify-between pb-[3px] text-[46px] leading-none text-[#999]">
      <span>09:30</span>
      <span>11:30/13:00</span>
      <span>15:00</span>
    </div>
  </section>
);

const BottomBar = () => (
  <footer className="h-[127px] border-t-2 border-[#d6dcd6] bg-[#f6f7fa]">
    <div className="grid h-[113px] grid-cols-3 pt-[8px] text-[52px] leading-none text-[#d95c14]">
      <button className="flex items-center justify-center gap-[18px]">
        <Chevron left className="h-[38px] w-[22px]" />
        前一天
      </button>
      <button className="flex items-center justify-center gap-[18px]">
        后一天
        <Chevron className="h-[38px] w-[22px]" />
      </button>
      <button className="text-[#666]">关闭</button>
    </div>
    <div className="mx-[139px] grid h-[10px] grid-cols-[286fr_397fr_287fr] gap-[6px]">
      <span className="rounded-l-md border-2 border-[#e2e4e8] bg-[#fafbfc]" />
      <span className="border-2 border-[#e2e4e8] bg-[#fafbfc]" />
      <span className="rounded-r-md border-2 border-[#e2e4e8] bg-[#fafbfc]" />
    </div>
  </footer>
);

export default function App() {
  return (
    <main className="bg-[#fefefe] font-['Noto_Sans_CJK_SC','Noto_Sans',sans-serif]">
      <StatusBar />
      <Header />
      <Quote />
      <Notice />
      <Tabs />
      <MaRow />
      <DailyPanel />
      <div className="h-[21px] bg-gradient-to-b from-[#fefefe] to-[#f1f1f1]" />
      <ReviewHeader />
      <MinutePanel />
      <BottomBar />
    </main>
  );
}
